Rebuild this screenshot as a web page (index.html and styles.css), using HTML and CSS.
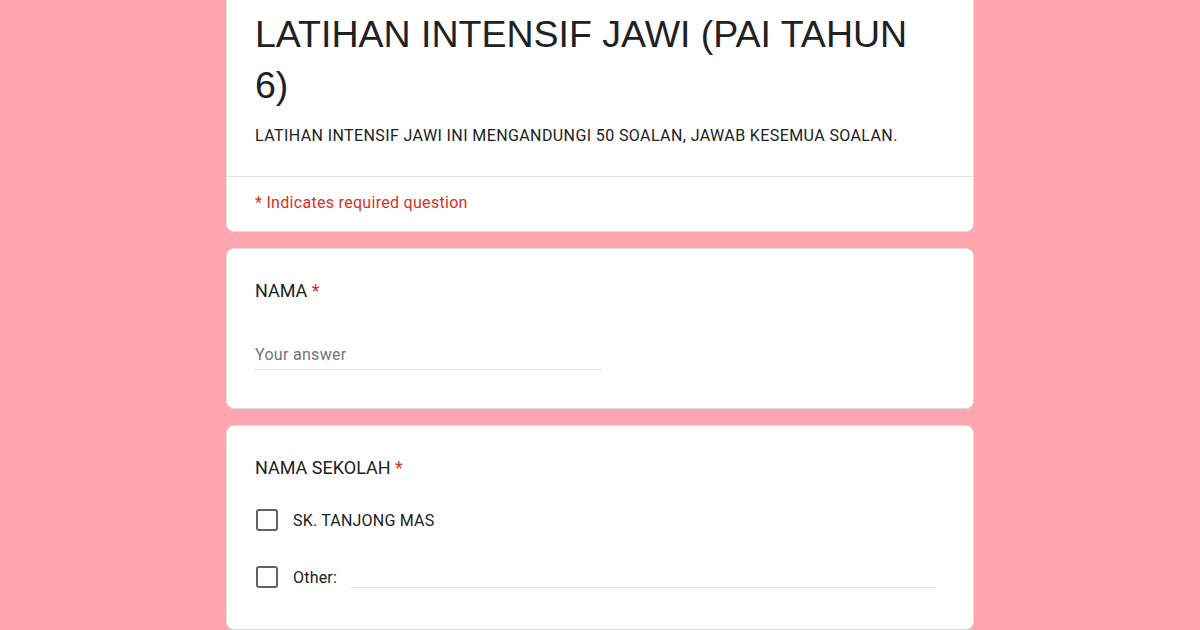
FILE: index.html
```html
<!DOCTYPE html>
<html lang="ms">
<head>
  <meta charset="utf-8">
  <meta name="viewport" content="width=device-width, initial-scale=1">
  <title>LATIHAN INTENSIF JAWI (PAI TAHUN 6)</title>
  <link rel="stylesheet" href="styles.css">
</head>
<body>
  <div class="form">
    <!-- Kad tajuk -->
    <div class="card header">
      <div class="header-main">
        <h1>LATIHAN INTENSIF JAWI (PAI TAHUN 6)</h1>
        <p class="desc">LATIHAN INTENSIF JAWI INI MENGANDUNGI 50 SOALAN, JAWAB KESEMUA SOALAN.</p>
      </div>
      <p class="required-note">* Indicates required question</p>
    </div>

    <!-- Soalan: nama -->
    <div class="card question">
      <div class="q-title">NAMA <span class="star">*</span></div>
      <div class="text-input">Your answer</div>
    </div>

    <!-- Soalan: nama sekolah -->
    <div class="card question">
      <div class="q-title">NAMA SEKOLAH <span class="star">*</span></div>
      <div class="options">
        <label class="option">
          <span class="box"></span>
          <span class="opt-label">SK. TANJONG MAS</span>
        </label>
        <label class="option">
          <span class="box"></span>
          <span class="opt-label">Other:</span>
          <span class="other-line"></span>
        </label>
      </div>
    </div>
  </div>
</body>
</html>
```

FILE: styles.css
```css
/* Reset & variáveis */
* { box-sizing: border-box; margin: 0; padding: 0; }
:root {
  --bg-body: #ffa6ae;
  --fg-text: #202124;
  --fg-muted: #70757a;
  --red: #d93025;
  --line: #e0e0e0;
  --radius: 8px;
}
body {
  font-family: 'Roboto', sans-serif;
  background: var(--bg-body);
  color: var(--fg-text);
}

.form {
  width: 748px;
  margin: -20px auto 0;
  display: flex;
  flex-direction: column;
  gap: 16px;
}

.card {
  background: #fff;
  border: 1px solid #dadce0;
  border-radius: var(--radius);
}

/* Kad tajuk */
.header-main {
  padding: 28px 40px 28px 28px;
  border-bottom: 1px solid var(--line);
}
.header-main h1 {
  font-family: 'Liberation Sans', Arial, sans-serif;
  font-weight: 400;
  font-size: 37.5px;
  line-height: 51px;
  color: #202124;
}
.desc {
  margin-top: 13px;
  font-size: 16px;
  line-height: 24px;
  letter-spacing: 0.4px;
}
.required-note {
  padding: 14px 28px 16px;
  font-size: 16px;
  line-height: 24px;
  letter-spacing: 0.3px;
  color: var(--red);
}

/* Soalan */
.question {
  padding: 30px 28px 38px;
}
.question:last-child {
  padding-bottom: 41px;
}
.q-title {
  font-size: 18px;
  line-height: 24px;
}
.star {
  color: var(--red);
}
.text-input {
  margin-top: 42px;
  width: 346px;
  font-size: 16px;
  line-height: 20px;
  letter-spacing: 0.3px;
  color: var(--fg-muted);
  padding-bottom: 4px;
  border-bottom: 1px solid var(--line);
}

.options {
  margin-top: 29px;
  display: flex;
  flex-direction: column;
  gap: 35px;
}
.option {
  display: flex;
  align-items: center;
  font-size: 16px;
  letter-spacing: 0.2px;
}
.box {
  width: 22px;
  height: 22px;
  border: 2px solid #5f6368;
  border-radius: 3px;
  margin-left: 1px;
  margin-right: 15px;
  flex: none;
}
.other-line {
  flex: 1;
  align-self: flex-end;
  height: 1px;
  background: var(--line);
  margin: 0 9px 0 14px;
}
```
